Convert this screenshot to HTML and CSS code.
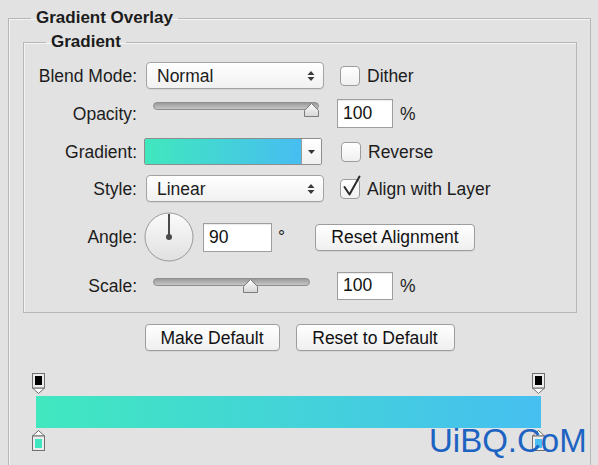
FILE: index.html
```html
<!DOCTYPE html>
<html lang="en">
<head>
    <meta charset="UTF-8">
    <title>Gradient Overlay</title>
    <link rel="stylesheet" href="styles.css">
</head>
<body>
    <fieldset class="group outer">
        <legend>Gradient Overlay</legend>

        <fieldset class="group inner">
            <legend>Gradient</legend>
            <div class="rows">
                <div class="row">
                    <span class="label">Blend Mode:</span>
                    <div class="select">
                        <span>Normal</span>
                        <svg class="updown" width="8" height="12" viewBox="0 0 8 12"><path d="M0.5 5 L4 1 L7.5 5 Z M0.5 7 L4 11 L7.5 7 Z" fill="#3a3a3a"/></svg>
                    </div>
                    <div class="option">
                        <span class="check"></span>
                        <span>Dither</span>
                    </div>
                </div>

                <div class="row row-tall">
                    <span class="label">Opacity:</span>
                    <div class="slider slider-opacity">
                        <div class="track"></div>
                        <svg class="thumb" style="left: 150px" width="17" height="16" viewBox="0 0 17 16"><path d="M1.5 14.5 V8.5 L8.5 1.5 L15.5 8.5 V14.5 Z" fill="url(#thumbFill)" stroke="#7c7c7c" stroke-linejoin="round"/></svg>
                    </div>
                    <input class="field field-num opacity-field" type="text" value="100">
                    <span class="unit">%</span>
                </div>

                <div class="row">
                    <span class="label">Gradient:</span>
                    <div class="picker">
                        <div class="swatch"></div>
                        <div class="drop">
                            <svg width="7" height="4" viewBox="0 0 7 4"><path d="M0 0 H7 L3.5 4 Z" fill="#333"/></svg>
                        </div>
                    </div>
                    <div class="option option-wide">
                        <span class="check"></span>
                        <span>Reverse</span>
                    </div>
                </div>

                <div class="row">
                    <span class="label">Style:</span>
                    <div class="select">
                        <span>Linear</span>
                        <svg class="updown" width="8" height="12" viewBox="0 0 8 12"><path d="M0.5 5 L4 1 L7.5 5 Z M0.5 7 L4 11 L7.5 7 Z" fill="#3a3a3a"/></svg>
                    </div>
                    <div class="option">
                        <span class="check">
                            <svg class="tick" width="22" height="24" viewBox="0 0 22 24"><path d="M3.5 13 L8.5 20.5 L18.5 2.5" fill="none" stroke="#2a2a2a" stroke-width="2" stroke-linecap="round" stroke-linejoin="round"/></svg>
                        </span>
                        <span>Align with Layer</span>
                    </div>
                </div>

                <div class="row row-angle">
                    <span class="label">Angle:</span>
                    <svg class="dial" width="50" height="50" viewBox="0 0 50 50">
                        <defs>
                            <linearGradient id="dialFill" x1="0" y1="0" x2="0" y2="1">
                                <stop offset="0" stop-color="#fbfbfb"/>
                                <stop offset="1" stop-color="#e0e0e0"/>
                            </linearGradient>
                            <linearGradient id="thumbFill" x1="0" y1="0" x2="0" y2="1">
                                <stop offset="0" stop-color="#fdfdfd"/>
                                <stop offset="1" stop-color="#d6d6d6"/>
                            </linearGradient>
                        </defs>
                        <circle cx="25" cy="25" r="24" fill="url(#dialFill)" stroke="#9a9a9a"/>
                        <line x1="25" y1="25" x2="25" y2="2" stroke="#4a4a4a" stroke-width="2"/>
                        <circle cx="25" cy="25" r="3" fill="#4a4a4a"/>
                    </svg>
                    <input class="field angle-field" type="text" value="90">
                    <span class="deg">°</span>
                    <button class="btn btn-align">Reset Alignment</button>
                </div>

                <div class="row">
                    <span class="label">Scale:</span>
                    <div class="slider slider-scale">
                        <div class="track"></div>
                        <svg class="thumb" style="left: 89px" width="17" height="16" viewBox="0 0 17 16"><path d="M1.5 14.5 V8.5 L8.5 1.5 L15.5 8.5 V14.5 Z" fill="url(#thumbFill)" stroke="#7c7c7c" stroke-linejoin="round"/></svg>
                    </div>
                    <input class="field field-num scale-field" type="text" value="100">
                    <span class="unit">%</span>
                </div>
            </div>
        </fieldset>

        <div class="actions">
            <button class="btn btn-make">Make Default</button>
            <button class="btn btn-reset">Reset to Default</button>
        </div>

        <!-- gradient editor -->
        <div class="stops stops-top">
            <svg width="13" height="21" viewBox="0 0 13 21"><path d="M0.5 15 L6.5 20.5 L12.5 15 Z" fill="#fff" stroke="#6f6f6f"/><rect x="0.5" y="0.5" width="12" height="14.5" fill="#ececec" stroke="#6f6f6f"/><rect x="3" y="3" width="7" height="9" fill="#000"/></svg>
            <svg width="13" height="21" viewBox="0 0 13 21"><path d="M0.5 15 L6.5 20.5 L12.5 15 Z" fill="#fff" stroke="#6f6f6f"/><rect x="0.5" y="0.5" width="12" height="14.5" fill="#ececec" stroke="#6f6f6f"/><rect x="3" y="3" width="7" height="9" fill="#000"/></svg>
        </div>
        <div class="bar"></div>
        <div class="stops">
            <svg width="13" height="21" viewBox="0 0 13 21"><path d="M0.5 6 L6.5 0.5 L12.5 6 Z" fill="#fff" stroke="#6f6f6f"/><rect x="0.5" y="6" width="12" height="14.5" fill="#ececec" stroke="#6f6f6f"/><rect x="3" y="9" width="7" height="9" fill="#40e6bf"/></svg>
            <svg width="13" height="21" viewBox="0 0 13 21"><path d="M0.5 6 L6.5 0.5 L12.5 6 Z" fill="#fff" stroke="#6f6f6f"/><rect x="0.5" y="6" width="12" height="14.5" fill="#ececec" stroke="#6f6f6f"/><rect x="3" y="9" width="7" height="9" fill="#47bff0"/></svg>
        </div>
    </fieldset>

    <div class="watermark">UiBQ.CoM</div>
</body>
</html>
```

FILE: styles.css
```css
html, body {
    overflow: hidden;
}

body {
    margin: 0;
    background-color: #e2e2e2;
    font-family: 'Liberation Sans', Arial, sans-serif;
    font-size: 17.5px;
    line-height: 20px;
    color: #1c1c1c;
}

/* Group boxes */
.group {
    margin: 0;
    padding: 0;
    border: 1px solid #b7b7b7;
    box-shadow: inset 1px 1px 0 #f3f3f3;
    min-width: 0;
}

.group legend {
    font-weight: bold;
    font-size: 17px;
    padding: 0 5px;
}

.outer {
    margin: 8px 0 0 8px;
    width: 583px;
    box-sizing: border-box;
    padding: 4px 0 30px 0;
}

.outer > legend {
    margin-left: 22px;
}

.inner {
    margin: 0 13px 0 14px;
    padding: 10px 0 13px 0;
}

.inner > legend {
    margin-left: 22px;
}

/* Form rows */
.rows {
    display: flex;
    flex-direction: column;
    gap: 10px;
}

.row {
    display: flex;
    align-items: center;
    height: 27px;
}

.row-tall {
    height: 29px;
}

.row-angle {
    height: 50px;
}

.label {
    width: 113px;
    text-align: right;
    flex-shrink: 0;
}

.select {
    margin-left: 9px;
    width: 178px;
    height: 27px;
    box-sizing: border-box;
    border: 1px solid #a3a3a3;
    border-radius: 4px;
    background: linear-gradient(#ffffff, #f1f1f1);
    box-shadow: 0 1px 0 rgba(0, 0, 0, 0.06);
    display: flex;
    align-items: center;
    justify-content: space-between;
    padding: 0 8px 0 10px;
}

.option {
    margin-left: 16px;
    display: flex;
    align-items: center;
    gap: 7px;
}

.option-wide {
    margin-left: 19px;
}

.check {
    position: relative;
    width: 20px;
    height: 20px;
    box-sizing: border-box;
    border: 1px solid #9c9c9c;
    border-radius: 4px;
    background: linear-gradient(#ffffff, #f0f0f0);
}

.check .tick {
    position: absolute;
    left: 0;
    top: -6px;
}

/* Sliders */
.slider {
    position: relative;
    align-self: flex-start;
    margin-left: 16px;
    height: 16px;
}

.slider-opacity {
    width: 166px;
    margin-top: 3px;
}

.slider-scale {
    width: 157px;
    margin-top: 6px;
}

.track {
    height: 8px;
    box-sizing: border-box;
    border: 1px solid #8f8f8f;
    border-radius: 4px;
    background: linear-gradient(#9a9a9a, #c6c6c6);
}

.thumb {
    position: absolute;
    top: 0;
}

/* Text fields */
.field {
    height: 29px;
    box-sizing: border-box;
    border: 1px solid #9e9e9e;
    background-color: #ffffff;
    box-shadow: inset 0 1px 1px rgba(0, 0, 0, 0.08);
    font: inherit;
    color: #111111;
    padding: 0 5px;
    margin: 0;
    outline: none;
}

.field-num {
    width: 56px;
}

.opacity-field {
    margin-left: 18px;
}

.scale-field {
    margin-left: 27px;
    height: 28px;
}

.unit {
    margin-left: 7px;
}

/* Gradient picker */
.picker {
    margin-left: 7px;
    display: flex;
    height: 27px;
    box-sizing: border-box;
    border: 1px solid #8d8d8d;
    border-radius: 2px;
    overflow: hidden;
}

.swatch {
    width: 156px;
    background: linear-gradient(to right, #40e8bd, #47bdf1);
}

.drop {
    width: 19px;
    border-left: 1px solid #9a9a9a;
    background: linear-gradient(#ffffff, #f0f0f0);
    display: flex;
    align-items: center;
    justify-content: center;
}

/* Angle */
.dial {
    margin-left: 7px;
}

.angle-field {
    margin-left: 9px;
    width: 69px;
}

.deg {
    width: 43px;
    padding-left: 6px;
    box-sizing: border-box;
}

/* Buttons */
.btn {
    height: 27px;
    box-sizing: border-box;
    border: 1px solid #9d9d9d;
    border-radius: 4px;
    background: linear-gradient(#ffffff, #efefef);
    box-shadow: 0 1px 0 rgba(0, 0, 0, 0.06);
    font: inherit;
    color: #111111;
    padding: 0;
    margin: 0;
}

.btn-align {
    width: 160px;
}

.actions {
    margin-top: 11px;
    display: flex;
    justify-content: center;
    gap: 16px;
}

.btn-make {
    width: 135px;
}

.btn-reset {
    width: 159px;
}

/* Gradient editor */
.stops {
    display: flex;
    justify-content: space-between;
    margin-left: 23px;
    width: 513px;
    height: 21px;
}

.stops-top {
    margin-top: 22px;
}

.bar {
    margin: 2px 0 2px 27px;
    width: 505px;
    height: 32px;
    background: linear-gradient(to right, #40e8bf, #46bff1);
}

.watermark {
    position: absolute;
    left: 429px;
    top: 424px;
    font-size: 33px;
    line-height: 33px;
    color: #1d63c2;
}
```
